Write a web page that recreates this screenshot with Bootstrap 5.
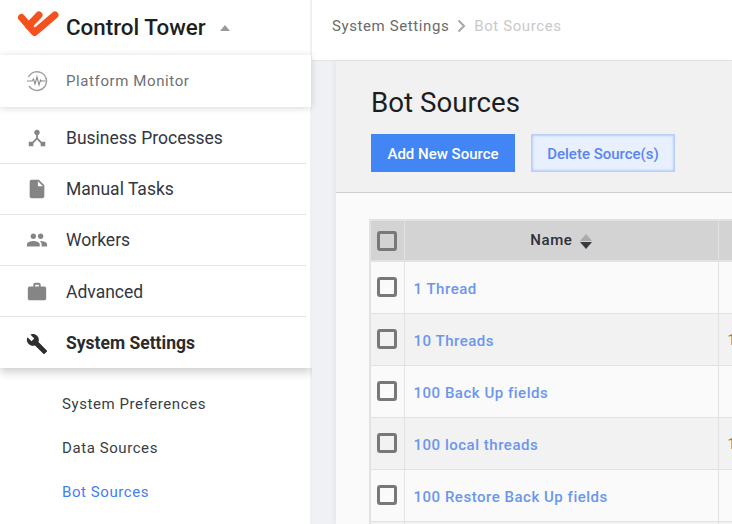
<!DOCTYPE html>
<html lang="en">
<head>
  <meta charset="UTF-8">
  <title>Bot Sources</title>
  <meta name="viewport" content="width=device-width, initial-scale=1">
  <link href="https://cdn.jsdelivr.net/npm/bootstrap@5.3.0/dist/css/bootstrap.min.css" rel="stylesheet">
  <style>
    html, body { height: 100%; overflow: hidden; }
    body { font-family: Roboto, "Liberation Sans", sans-serif; color: #2f3136; background: #fff; }
    .app-shell { width: 732px; height: 524px; overflow: hidden; }

    .side-panel { width: 312px; flex: none; border-right: 2px solid #eef0f4; background: #fff; }
    .brand-row { height: 55px; padding-left: 18px; }
    .brand-logo { margin-bottom: 5px; }
    .brand-name { font-size: 22.4px; font-weight: 500; color: #1d1f24; margin-left: 6px; }
    .brand-caret { width: 0; height: 0; border: 5px solid transparent; border-top: 0; border-bottom: 6px solid #9a9a9a; margin-left: 14px; margin-top: 1px; }

    .monitor-row { height: 52px; background: #fff; margin-right: -1px; box-shadow: 0 1px 7px rgba(0,0,0,.16); position: relative; z-index: 1; color: #6f6f73; font-size: 15px; letter-spacing: .6px; }
    .nav-group { padding-top: 6px; padding-right: 6px; margin-right: -2px; box-shadow: 0 4px 9px rgba(0,0,0,.2); }
    .nav-line { height: 51px; border-bottom: 1px solid #e6e6e6; font-size: 17.5px; color: #33373f; }
    .nav-line:nth-child(n+4) { padding-top: 2px; }
    .nav-line:last-child { border-bottom: 0; font-weight: 700; color: #2b2b2d; }
    .nav-glyph { width: 66px; padding-left: 26px; flex: none; }
    .nav-glyph svg { display: block; fill: #858585; }
    .nav-glyph .glyph-dark { fill: #2d2d2d; }
    .sub-menu { padding: 14px 0 0 62px; }
    .sub-link { height: 44px; font-size: 15px; letter-spacing: .58px; color: #3a3d42; text-decoration: none; }
    .sub-link.is-current { color: #3f80f5; }

    .work-area { min-width: 0; flex: 1; background: #eff1f5; }
    .crumb-bar { height: 61px; background: #fff; border-bottom: 1px solid #e4e4e6; padding: 0 0 8px 20px; font-size: 15px; letter-spacing: .6px; color: #6a6a6a; }
    .crumb-last { color: #c9c9c9; }
    .crumb-sep { margin: 0 8px; }
    .page-panel { margin-left: 24px; height: 463px; background: #fafafa; box-shadow: -2px 0 6px rgba(0,0,0,.05); overflow: hidden; }
    .page-head { height: 132px; background: #f1f1f2; border-bottom: 1px solid #cfcfcf; padding: 26px 0 0 35px; }
    .page-title { font-size: 27.7px; font-weight: 400; line-height: 32px; color: #1d1d1f; margin: 0 0 15px; }
    .btn-add, .btn-del { height: 38px; border-radius: 0; font-size: 15px; font-weight: 500; padding: 2px 0 0; }
    .btn-add { width: 144px; background: #4285f4; border: 0; color: #fff; }
    .btn-del { width: 144px; margin-left: 16px; background: #e8f0fe; border: 1px solid #b7cffa; box-shadow: inset 0 0 2px 1px #b7cffa; color: #5b84f1; }

    .grid-wrap { padding: 26px 0 0 33px; }
    .source-grid { width: 500px; table-layout: fixed; border-collapse: collapse; border: 2px solid #e2e2e2; font-size: 15px; margin: 0; }
    .source-grid th, .source-grid td { border: 1px solid #e2e2e2; padding: 0; vertical-align: middle; background: transparent; }
    .source-grid thead th { height: 41px; background: #d3d3d3; border-bottom: 2px solid #e2e2e2; text-align: center; font-weight: 500; color: #2f2f36; letter-spacing: .55px; }
    .source-grid tbody tr { height: 52px; }
    .source-grid tbody tr:nth-child(even) td { background: #f2f2f2; }
    .col-check { width: 34px; }
    .col-name { width: 314px; }
    .col-next { width: 152px; }
    .cell-name { padding: 4px 0 0 9px !important; }
    .cell-next { padding: 2px 0 0 9px !important; color: #a8763f; }
    .source-link { color: #6b96ee; font-weight: 500; text-decoration: none; letter-spacing: .52px; }
    .tick-box { display: block; width: 20px; height: 20px; margin: 0 0 0 6px; border: 3px solid #787878; border-radius: 3px; background: transparent; }
    .sort-mark { display: inline-block; margin-left: 3px; vertical-align: -4px; }
    .sort-mark i { display: block; width: 0; height: 0; border: 6px solid transparent; }
    .sort-up { border-top: 0 !important; border-bottom: 7px solid #a9abae !important; margin-bottom: 1px; }
    .sort-down { border-bottom: 0 !important; border-top: 7px solid #3a3a3e !important; }
  </style>
</head>
<body>
  <div class="app-shell d-flex">
    <aside class="side-panel">
      <div class="brand-row d-flex align-items-center">
        <svg class="brand-logo" width="42" height="28" viewBox="0 0 42 28"><g fill="none" stroke="#f4511e" stroke-width="7" stroke-linecap="round" stroke-linejoin="round"><path d="M3.5 6.5L16.5 21.5 37 4"/><path d="M10.5 15L21 4"/></g></svg>
        <span class="brand-name">Control Tower</span>
        <span class="brand-caret"></span>
      </div>
      <div class="monitor-row d-flex align-items-center">
        <div class="nav-glyph"><svg width="22" height="22" viewBox="0 0 22 22"><path d="M2.5 7A9.5 9.5 0 0 1 20.5 11A9.5 9.5 0 0 1 3 16" fill="none" stroke="#a3a3a3" stroke-width="1.6"/><path d="M1 11h5l1.5-2 1.5 5 2-7 2 8 1.5-5 1 1h4" fill="none" stroke="#8d8d8d" stroke-width="1.1"/></svg></div>
        <span>Platform Monitor</span>
      </div>
      <div class="nav-group">
        <div class="nav-line d-flex align-items-center">
          <div class="nav-glyph"><svg width="22" height="22" viewBox="0 0 24 24"><path d="M17 16l-4-4V8.82C14.16 8.4 15 7.3 15 6c0-1.66-1.34-3-3-3S9 4.34 9 6c0 1.3.84 2.4 2 2.82V12l-4 4H3v5h5v-3.05l4-4.2 4 4.2V21h5v-5h-4z"/></svg></div>
          <span>Business Processes</span>
        </div>
        <div class="nav-line d-flex align-items-center">
          <div class="nav-glyph"><svg width="22" height="22" viewBox="0 0 24 24"><path d="M6 2c-1.1 0-1.99.9-1.99 2L4 20c0 1.1.89 2 1.99 2H18c1.1 0 2-.9 2-2V8l-6-6H6zm7 7V3.5L18.5 9H13z"/></svg></div>
          <span>Manual Tasks</span>
        </div>
        <div class="nav-line d-flex align-items-center">
          <div class="nav-glyph"><svg width="22" height="22" viewBox="0 0 24 24"><path d="M16 11c1.66 0 2.99-1.34 2.99-3S17.66 5 16 5c-1.66 0-3 1.34-3 3s1.34 3 3 3zm-8 0c1.66 0 2.99-1.34 2.99-3S9.66 5 8 5C6.34 5 5 6.34 5 8s1.34 3 3 3zm0 2c-2.33 0-7 1.17-7 3.5V19h14v-2.5c0-2.33-4.67-3.5-7-3.5zm8 0c-.29 0-.62.02-.97.05 1.16.84 1.97 1.97 1.97 3.45V19h6v-2.5c0-2.33-4.67-3.5-7-3.5z"/></svg></div>
          <span>Workers</span>
        </div>
        <div class="nav-line d-flex align-items-center">
          <div class="nav-glyph"><svg width="22" height="22" viewBox="0 0 24 24"><path d="M20 6h-4V4c0-1.11-.89-2-2-2h-4c-1.11 0-2 .89-2 2v2H4c-1.11 0-1.99.89-1.99 2L2 19c0 1.11.89 2 2 2h16c1.11 0 2-.89 2-2V8c0-1.11-.89-2-2-2zm-6 0h-4V4h4v2z"/></svg></div>
          <span>Advanced</span>
        </div>
        <div class="nav-line d-flex align-items-center">
          <div class="nav-glyph"><svg class="glyph-dark" width="22" height="22" viewBox="0 0 24 24"><path d="M22.7 19l-9.1-9.1c.9-2.3.4-5-1.5-6.9-2-2-5-2.4-7.4-1.3L9 6 6 9 1.6 4.7C.4 7.1.9 10.1 2.9 12.1c1.9 1.9 4.6 2.4 6.9 1.5l9.1 9.1c.4.4 1 .4 1.4 0l2.3-2.3c.5-.4.5-1.1.1-1.4z"/></svg></div>
          <span>System Settings</span>
        </div>
      </div>
      <nav class="sub-menu d-flex flex-column">
        <a class="sub-link d-flex align-items-center" href="#">System Preferences</a>
        <a class="sub-link d-flex align-items-center" href="#">Data Sources</a>
        <a class="sub-link is-current d-flex align-items-center" href="#">Bot Sources</a>
      </nav>
    </aside>

    <main class="work-area">
      <div class="crumb-bar d-flex align-items-center">
        <span>System Settings</span>
        <svg class="crumb-sep" width="9" height="14" viewBox="0 0 9 14"><path d="M1.5 1.5L7 7l-5.5 5.5" fill="none" stroke="#a8a8a8" stroke-width="2"/></svg>
        <span class="crumb-last">Bot Sources</span>
      </div>
      <div class="page-panel">
        <div class="page-head">
          <h1 class="page-title">Bot Sources</h1>
          <div class="d-flex">
            <button class="btn btn-add" type="button">Add New Source</button>
            <button class="btn btn-del" type="button">Delete Source(s)</button>
          </div>
        </div>
        <div class="grid-wrap">
          <table class="table source-grid">
            <colgroup><col class="col-check"><col class="col-name"><col class="col-next"></colgroup>
            <thead>
              <tr>
                <th><span class="tick-box"></span></th>
                <th>Name <span class="sort-mark"><i class="sort-up"></i><i class="sort-down"></i></span></th>
                <th></th>
              </tr>
            </thead>
            <tbody>
              <tr><td><span class="tick-box"></span></td><td class="cell-name"><a class="source-link" href="#">1 Thread</a></td><td class="cell-next"></td></tr>
              <tr><td><span class="tick-box"></span></td><td class="cell-name"><a class="source-link" href="#">10 Threads</a></td><td class="cell-next">1</td></tr>
              <tr><td><span class="tick-box"></span></td><td class="cell-name"><a class="source-link" href="#">100 Back Up fields</a></td><td class="cell-next"></td></tr>
              <tr><td><span class="tick-box"></span></td><td class="cell-name"><a class="source-link" href="#">100 local threads</a></td><td class="cell-next">1</td></tr>
              <tr><td><span class="tick-box"></span></td><td class="cell-name"><a class="source-link" href="#">100 Restore Back Up fields</a></td><td class="cell-next"></td></tr>
              <tr><td></td><td></td><td></td></tr>
            </tbody>
          </table>
        </div>
      </div>
    </main>
  </div>
  <script src="https://cdn.jsdelivr.net/npm/bootstrap@5.3.0/dist/js/bootstrap.bundle.min.js"></script>
</body>
</html>
